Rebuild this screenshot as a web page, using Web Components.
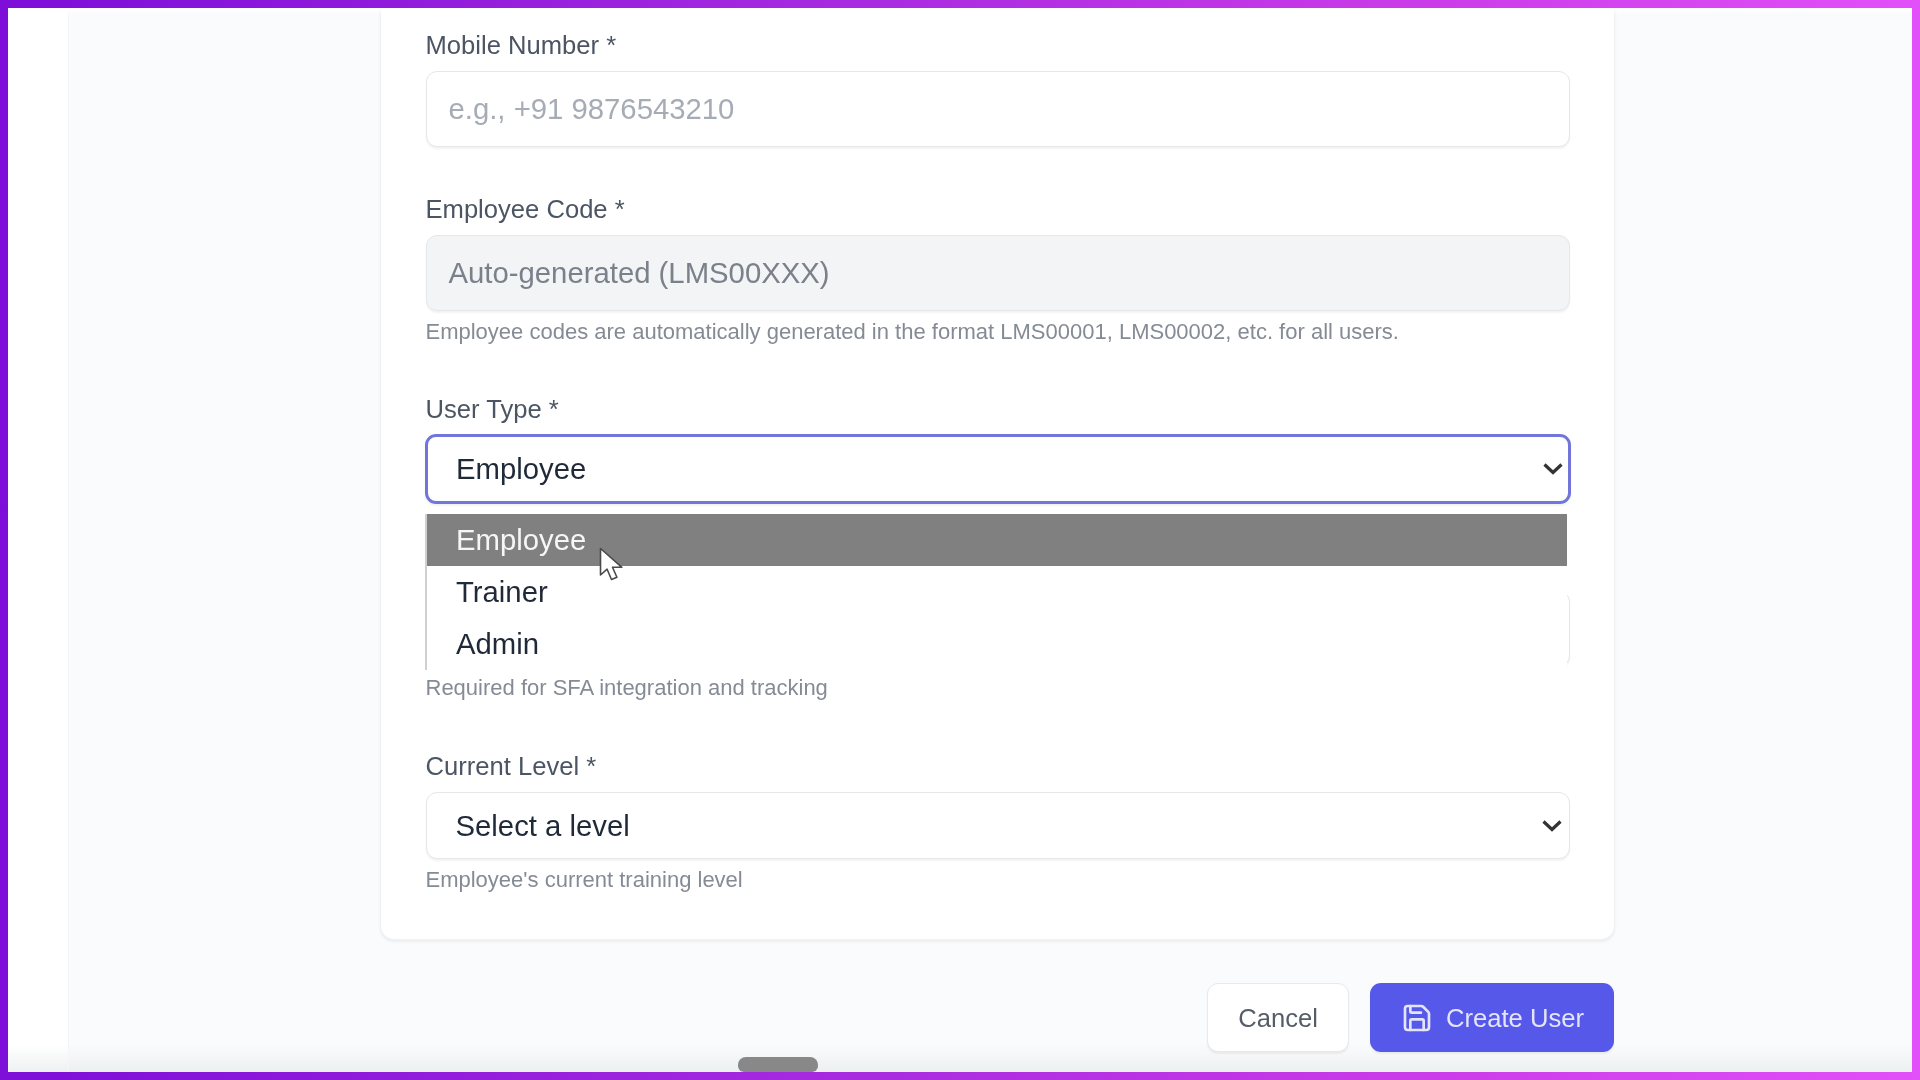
<!DOCTYPE html>
<html>
<head>
<meta charset="utf-8">
<title>Create User</title>
<style>
  html, body { margin: 0; height: 100%; }
  body { font-family: "Liberation Sans", Arial, sans-serif; overflow: hidden; }
</style>
</head>
<body>
<app-frame>
  <form-card>
    <form-field label="Mobile Number *" style="margin-bottom: 44px">
      <text-input placeholder="e.g., +91 9876543210"></text-input>
    </form-field>
    <form-field label="Employee Code *" hint="Employee codes are automatically generated in the format LMS00001, LMS00002, etc. for all users.">
      <text-input placeholder="Auto-generated (LMS00XXX)" disabled></text-input>
    </form-field>
    <form-field label="User Type *">
      <select-box value="Employee" focused></select-box>
      <option-list items="Employee,Trainer,Admin" active="Employee"></option-list>
    </form-field>
    <form-field label="&nbsp;" hint="Required for SFA integration and tracking" style="margin-bottom: 44px">
      <text-input></text-input>
    </form-field>
    <form-field label="Current Level *" hint="Employee's current training level">
      <select-box value="Select a level"></select-box>
    </form-field>
  </form-card>
  <form-actions>
    <action-button>Cancel</action-button>
    <action-button primary icon="save">Create User</action-button>
  </form-actions>
</app-frame>

<script>
class AppFrame extends HTMLElement {
  constructor() {
    super();
    this.attachShadow({mode: 'open'});
    this.shadowRoot.innerHTML = `
      <style>
        :host {
          display: block;
          box-sizing: border-box;
          width: 1920px;
          height: 1080px;
          padding: 8px;
          background: linear-gradient(90deg, #7d0ed8 0%, #a82be0 45%, #c93ae8 72%, #e150f8 100%);
        }
        .screen {
          position: relative;
          display: flex;
          height: 100%;
          background: linear-gradient(180deg, rgba(236,240,241,0), #eef1f2) bottom / 100% 28px no-repeat, #fff;
          overflow: hidden;
          filter: blur(.45px);
        }
        .strip { width: 60px; flex: none; }
        .page {
          flex: 1;
          box-sizing: border-box;
          padding: 0 297px 0 311px;
          background: linear-gradient(180deg, rgba(236,240,241,0), #ecf0f1) bottom / 100% 28px no-repeat, #fafbfd;
          border-left: 1px solid #f3f5f7;
        }
        .top {
          position: absolute;
          left: 0; right: 0; top: 0;
          height: 7px;
          background: linear-gradient(180deg, #fff, rgba(255,255,255,0));
          pointer-events: none;
        }
        .thumb {
          position: absolute;
          left: 730px;
          bottom: 0;
          width: 80px;
          height: 15px;
          border-radius: 8px 8px 6px 6px;
          background: #888;
        }
        .cursor { position: absolute; z-index: 3; left: 591px; top: 539px; }
      </style>
      <div class="screen">
        <div class="strip"></div>
        <div class="page"><slot></slot></div>
        <div class="top"></div>
        <div class="thumb"></div>
        <svg class="cursor" width="26" height="36" viewBox="0 0 26 36">
          <path d="M1.5 1.5v26.5l6.6-5.8 4.4 10.3 5.4-2.2-4.4-10h9.4z" fill="#fff" stroke="#4a4a4a" stroke-width="1.6" stroke-linejoin="round"/>
        </svg>
      </div>
    `;
  }
}
customElements.define('app-frame', AppFrame);

class FormCard extends HTMLElement {
  constructor() {
    super();
    this.attachShadow({mode: 'open'});
    this.shadowRoot.innerHTML = `
      <style>
        :host {
          display: block;
          box-sizing: border-box;
          height: 952px;
          margin-top: -20px;
          padding: 38px 44px 0 44.5px;
          background: #fff;
          border: 1px solid #f0f1f3;
          border-radius: 14px;
          box-shadow: 0 2px 3px rgba(0,0,0,.06);
        }
      </style>
      <slot></slot>
    `;
  }
}
customElements.define('form-card', FormCard);

class FormField extends HTMLElement {
  constructor() {
    super();
    this.attachShadow({mode: 'open'});
    const hint = this.getAttribute('hint');
    this.shadowRoot.innerHTML = `
      <style>
        :host { display: block; position: relative; margin-bottom: 43px; }
        .label {
          height: 36px;
          margin-bottom: 8px;
          font-size: 25.6px;
          line-height: 36px;
          color: #4b5563;
        }
        .hint {
          margin-top: 5px;
          font-size: 22px;
          line-height: 32px;
          color: #858b95;
        }
      </style>
      <div class="label"></div>
      <slot></slot>
      ${hint ? '<div class="hint"></div>' : ''}
    `;
    this.shadowRoot.querySelector('.label').textContent = this.getAttribute('label');
    if (hint) this.shadowRoot.querySelector('.hint').textContent = hint;
  }
}
customElements.define('form-field', FormField);

class TextInput extends HTMLElement {
  constructor() {
    super();
    this.attachShadow({mode: 'open'});
    const off = this.hasAttribute('disabled');
    this.shadowRoot.innerHTML = `
      <style>
        :host {
          display: flex;
          align-items: center;
          box-sizing: border-box;
          height: 76px;
          padding: 0 22px;
          font-size: 29.3px;
          background: ${off ? '#f3f4f6' : '#fff'};
          color: ${off ? '#7b818b' : '#a6acb5'};
          border: 1px solid #e5e7eb;
          border-radius: 11px;
          box-shadow: 0 2px 2px rgba(0,0,0,.05);
        }
      </style>
      <span></span>
    `;
    this.shadowRoot.querySelector('span').textContent = this.getAttribute('placeholder') || '';
  }
}
customElements.define('text-input', TextInput);

class SelectBox extends HTMLElement {
  constructor() {
    super();
    this.attachShadow({mode: 'open'});
    const focused = this.hasAttribute('focused');
    this.shadowRoot.innerHTML = `
      <style>
        :host {
          display: flex;
          align-items: center;
          justify-content: space-between;
          box-sizing: border-box;
          height: ${focused ? 70 : 67}px;
          ${focused ? 'margin: -1px -1px 0;' : ''}
          padding: 0 ${focused ? 5.5 : 7}px 0 ${focused ? 28.5 : 29}px;
          font-size: 29.3px;
          color: #1f2937;
          background: #fff;
          border: ${focused ? '3px solid #7276da' : '1px solid #e5e7eb'};
          border-radius: 11px;
          box-shadow: 0 2px 2px rgba(0,0,0,.05);
        }
      </style>
      <span></span>
      <svg width="20" height="14" viewBox="0 0 20 14" fill="none" stroke="#333" stroke-width="3.2">
        <path d="M1.5 2.5 10 10.5l8.5-8"/>
      </svg>
    `;
    this.shadowRoot.querySelector('span').textContent = this.getAttribute('value');
  }
}
customElements.define('select-box', SelectBox);

class OptionList extends HTMLElement {
  constructor() {
    super();
    this.attachShadow({mode: 'open'});
    const active = this.getAttribute('active');
    const rows = this.getAttribute('items').split(',').map(t =>
      `<div class="row${t === active ? ' on' : ''}">${t}</div>`).join('');
    this.shadowRoot.innerHTML = `
      <style>
        :host {
          position: absolute;
          z-index: 2;
          left: -0.5px;
          right: 3px;
          top: 123px;
          height: 156px;
          overflow: hidden;
          box-sizing: border-box;
          background: #fff;
          border-left: 2px solid #d0d0d0;
          font-size: 29.3px;
          color: #1f2937;
        }
        .row { height: 52px; line-height: 52px; padding-left: 29px; }
        .on { background: #808080; color: #f6f6f6; margin-left: -2px; padding-left: 31px; }
      </style>
      ${rows}
    `;
  }
}
customElements.define('option-list', OptionList);

class FormActions extends HTMLElement {
  constructor() {
    super();
    this.attachShadow({mode: 'open'});
    this.shadowRoot.innerHTML = `
      <style>
        :host {
          display: flex;
          justify-content: flex-end;
          gap: 21px;
          margin: 43px 1px 0 0;
        }
      </style>
      <slot></slot>
    `;
  }
}
customElements.define('form-actions', FormActions);

class ActionButton extends HTMLElement {
  constructor() {
    super();
    this.attachShadow({mode: 'open'});
    const primary = this.hasAttribute('primary');
    const icon = this.getAttribute('icon') === 'save' ? `
      <svg width="32" height="32" viewBox="0 0 24 24" fill="none" stroke="currentColor" stroke-width="2" stroke-linecap="round" stroke-linejoin="round">
        <path d="M15.2 3a2 2 0 0 1 1.4.6l3.8 3.8a2 2 0 0 1 .6 1.4V19a2 2 0 0 1-2 2H5a2 2 0 0 1-2-2V5a2 2 0 0 1 2-2z"/>
        <path d="M17 21v-7a1 1 0 0 0-1-1H8a1 1 0 0 0-1 1v7"/>
        <path d="M7 3v4a1 1 0 0 0 1 1h7"/>
      </svg>` : '';
    this.shadowRoot.innerHTML = `
      <style>
        :host {
          display: inline-flex;
          align-items: center;
          gap: 13px;
          box-sizing: border-box;
          height: 69px;
          padding: ${primary ? '1px 30px 0 31px' : '1px 30px 0'};
          font-size: 25.6px;
          border-radius: 11px;
          background: ${primary ? '#5558e8' : '#fff'};
          color: ${primary ? '#e4e5fb' : '#565d68'};
          border: ${primary ? '0' : '1px solid #e8e9ec'};
          box-shadow: 0 2px 2px rgba(0,0,0,.06);
        }
        svg { margin-top: -1px; }
      </style>
      ${icon}<slot></slot>
    `;
  }
}
customElements.define('action-button', ActionButton);
</script>
</body>
</html>
